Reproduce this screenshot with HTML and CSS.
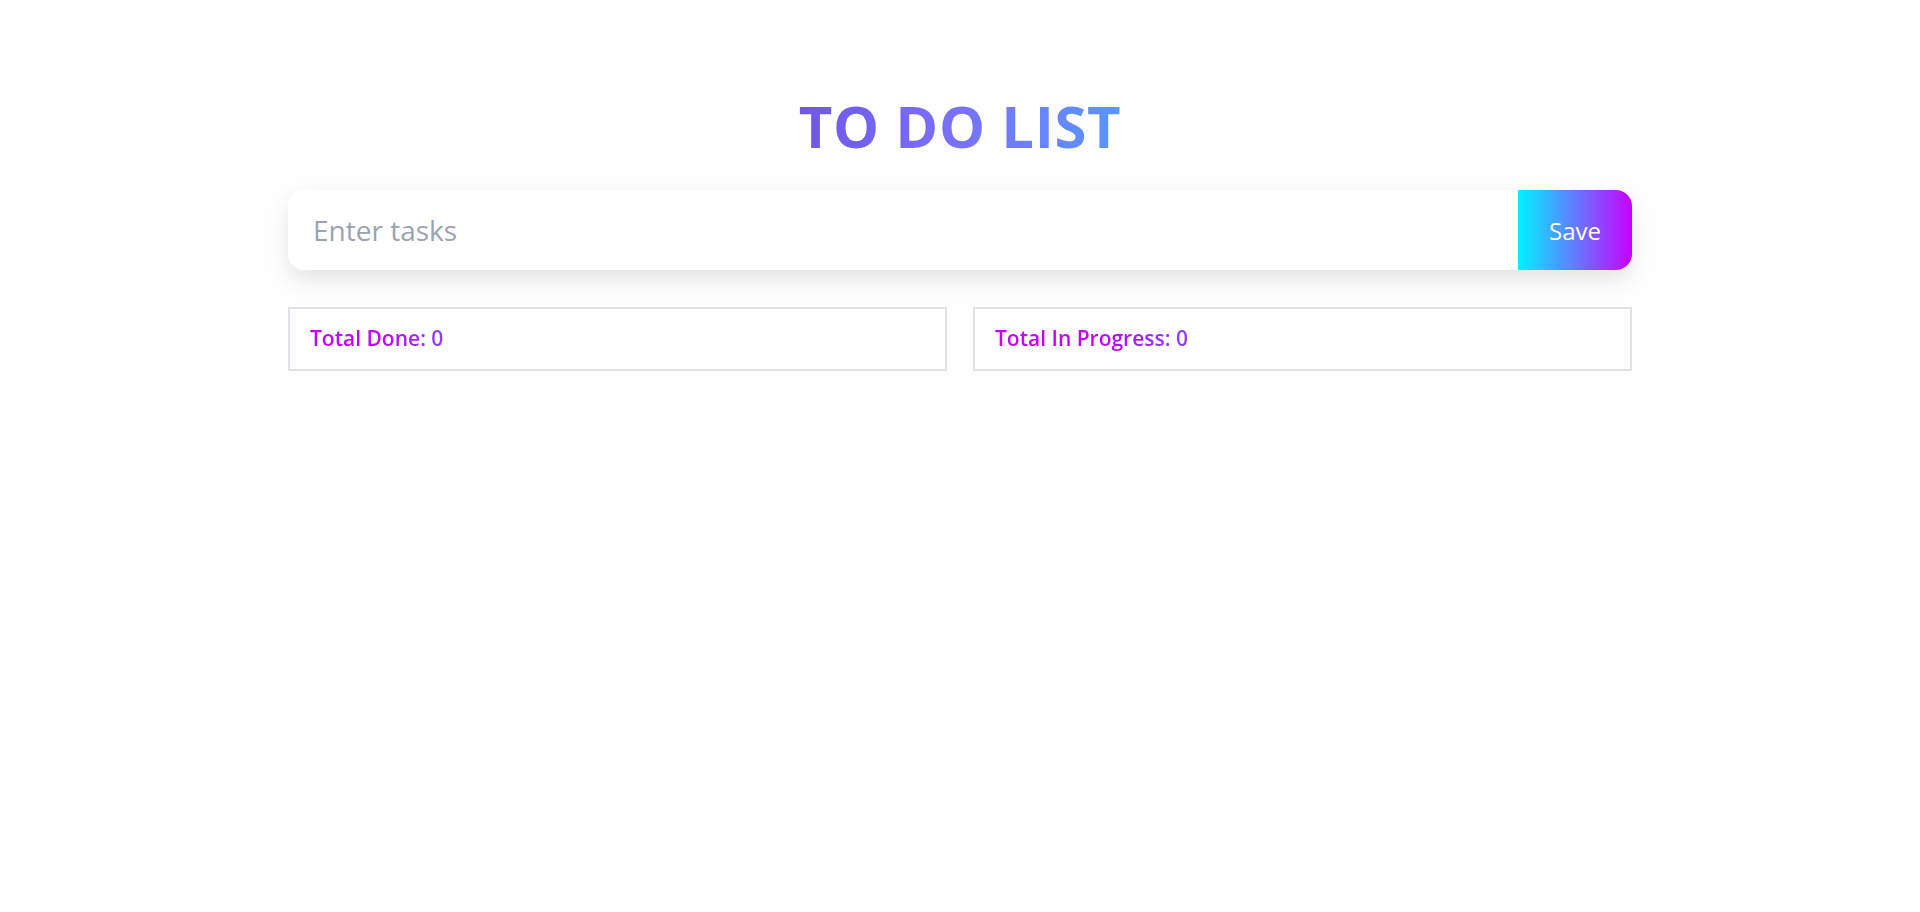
FILE: index.html
```html
<!DOCTYPE html>
<html lang="en">
<head>
<meta charset="utf-8">
<title>To Do List</title>
<link rel="stylesheet" href="styles.css">
</head>
<body>
<main class="app">
  <h1 class="title">TO DO LIST</h1>
  <form class="task-form" onsubmit="return false;">
    <input class="task-input" type="text" placeholder="Enter tasks">
    <button class="save-btn" type="submit">Save</button>
  </form>
  <section class="stats">
    <div class="stat-card"><span class="stat-text">Total Done: 0</span></div>
    <div class="stat-card"><span class="stat-text">Total In Progress: 0</span></div>
  </section>
</main>
</body>
</html>
```
FILE: styles.css
```css
* { box-sizing: border-box; }
html, body { margin: 0; padding: 0; background: #fefefe; }
body { font-family: "Open Sans", "Noto Sans", sans-serif; }

.app {
  width: 70%;
  margin: 0 auto;
  padding-top: 91px;
  display: flex;
  flex-direction: column;
}

.title {
  margin: 0 0 30px;
  align-self: center;
  font-size: 58px;
  line-height: 69px;
  font-weight: 700;
  letter-spacing: 0.6px;
  background: linear-gradient(to right, #6e58e6, #7a6ef8 45%, #5a96ff);
  -webkit-background-clip: text;
  background-clip: text;
  color: transparent;
}

.task-form {
  display: flex;
  height: 80px;
  border-radius: 16px;
  background: #fff;
  box-shadow: 0 10px 22px rgba(0, 0, 0, 0.10);
  overflow: hidden;
}

.task-input {
  flex: 1;
  border: none;
  outline: none;
  background: #fff;
  padding: 0 25px;
  font-family: inherit;
  font-size: 28px;
  color: #333;
}
.task-input::placeholder { color: #9ba3b0; }

.save-btn {
  width: 114px;
  border: none;
  background: linear-gradient(to right, #00f4ff, #c800ff);
  color: #fff;
  font-family: inherit;
  font-size: 24px;
  cursor: pointer;
}

.stats {
  margin-top: 37px;
  display: grid;
  grid-template-columns: 1fr 1fr;
  gap: 26px;
}

.stat-card {
  border: 2px solid #e2e1e7;
  padding: 15px 20px;
  line-height: 28px;
}

.stat-text {
  display: inline-block;
  font-size: 21px;
  font-weight: 600;
  background: linear-gradient(to right, #c800fa, #c400fb 55%, #8a40ff);
  -webkit-background-clip: text;
  background-clip: text;
  color: transparent;
}
```
